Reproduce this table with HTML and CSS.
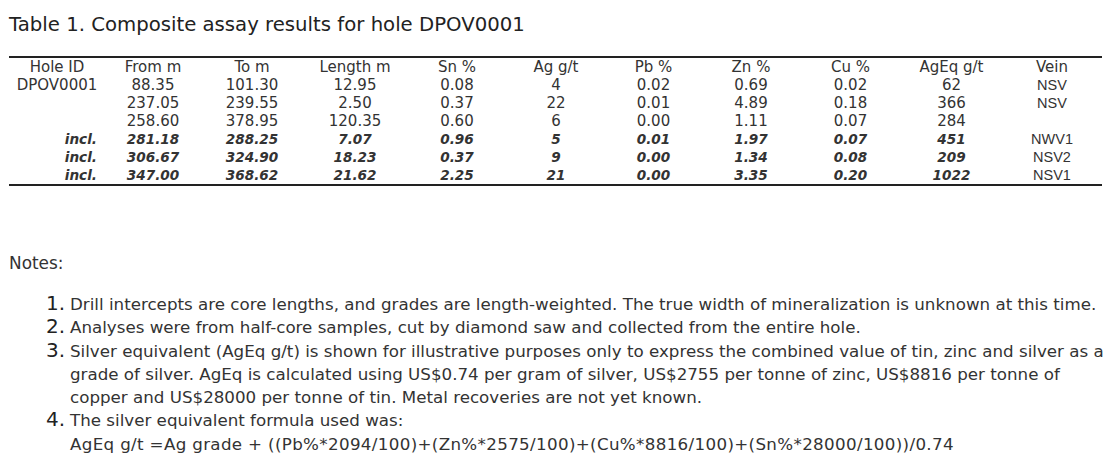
FILE: index.html
```html
<!DOCTYPE html>
<html>
<head>
<meta charset="utf-8">
<link rel="stylesheet" href="styles.css">
</head>
<body>
<h1 class="title">Table 1. Composite assay results for hole DPOV0001</h1>
<table class="assay">
  <colgroup>
    <col class="c1"><col class="c2"><col class="c3"><col class="c4"><col class="c5"><col class="c6"><col class="c7"><col class="c8"><col class="c9"><col class="c10"><col class="c11">
  </colgroup>
  <thead>
    <tr><th>Hole ID</th><th>From m</th><th>To m</th><th>Length m</th><th>Sn %</th><th>Ag g/t</th><th>Pb %</th><th>Zn %</th><th>Cu %</th><th>AgEq g/t</th><th>Vein</th></tr>
  </thead>
  <tbody>
    <tr><td>DPOV0001</td><td>88.35</td><td>101.30</td><td>12.95</td><td>0.08</td><td>4</td><td>0.02</td><td>0.69</td><td>0.02</td><td>62</td><td class="vein">NSV</td></tr>
    <tr><td></td><td>237.05</td><td>239.55</td><td>2.50</td><td>0.37</td><td>22</td><td>0.01</td><td>4.89</td><td>0.18</td><td>366</td><td class="vein">NSV</td></tr>
    <tr><td></td><td>258.60</td><td>378.95</td><td>120.35</td><td>0.60</td><td>6</td><td>0.00</td><td>1.11</td><td>0.07</td><td>284</td><td class="vein"></td></tr>
    <tr class="incl"><td class="lbl">incl.</td><td>281.18</td><td>288.25</td><td>7.07</td><td>0.96</td><td>5</td><td>0.01</td><td>1.97</td><td>0.07</td><td>451</td><td class="vein">NWV1</td></tr>
    <tr class="incl"><td class="lbl">incl.</td><td>306.67</td><td>324.90</td><td>18.23</td><td>0.37</td><td>9</td><td>0.00</td><td>1.34</td><td>0.08</td><td>209</td><td class="vein">NSV2</td></tr>
    <tr class="incl last"><td class="lbl">incl.</td><td>347.00</td><td>368.62</td><td>21.62</td><td>2.25</td><td>21</td><td>0.00</td><td>3.35</td><td>0.20</td><td>1022</td><td class="vein">NSV1</td></tr>
  </tbody>
</table>
<p class="notes-label">Notes:</p>
<ol class="notes">
  <li>Drill intercepts are core lengths, and grades are length-weighted. The true width of mineralization is unknown at this time.</li>
  <li>Analyses were from half-core samples, cut by diamond saw and collected from the entire hole.</li>
  <li>Silver equivalent (AgEq g/t) is shown for illustrative purposes only to express the combined value of tin, zinc and silver as a grade of silver. AgEq is calculated using US$0.74 per gram of silver, US$2755 per tonne of zinc, US$8816 per tonne of copper and US$28000 per tonne of tin. Metal recoveries are not yet known.</li>
  <li>The silver equivalent formula used was:<br><span class="formula">AgEq g/t =Ag grade + ((Pb%*2094/100)+(Zn%*2575/100)+(Cu%*8816/100)+(Sn%*28000/100))/0.74</span></li>
</ol>
</body>
</html>
```
FILE: styles.css
```css
html, body {
  background: #ffffff;
}
body {
  margin: 0;
  padding: 0 0 0 9px;
  font-family: "DejaVu Sans", Verdana, sans-serif;
  color: #222222;
}
.title {
  margin: 0;
  padding-top: 13px;
  font-size: 19.7px;
  font-weight: normal;
  line-height: 24px;
  color: #222222;
}
.assay {
  margin-top: 19px;
  border-collapse: collapse;
  table-layout: fixed;
  width: 1093px;
  font-size: 15px;
  color: #333333;
}
.c1 { width: 96px; }
.c2 { width: 96px; }
.c3 { width: 102px; }
.c4 { width: 104px; }
.c5 { width: 100px; }
.c6 { width: 98px; }
.c7 { width: 97px; }
.c8 { width: 98px; }
.c9 { width: 101px; }
.c10 { width: 101px; }
.c11 { width: 100px; }
.assay thead tr {
  border-top: 2px solid #222222;
}
.assay th {
  font-weight: normal;
  text-align: center;
  padding: 1px 0 0 0;
  height: 17px;
  line-height: 17px;
}
.assay td {
  text-align: center;
  padding: 0;
  height: 18px;
  line-height: 18px;
}
.assay tr.incl td {
  font-weight: bold;
  font-style: italic;
  font-size: 13.6px;
}
.assay tr.incl td.lbl {
  text-align: right;
  padding-right: 8px;
}
.assay td.vein {
  font-family: "Liberation Sans", Arial, sans-serif;
  font-size: 14.5px;
}
.assay tr.incl td.vein {
  font-weight: normal;
  font-style: normal;
  font-size: 14.5px;
}
.assay tr.last {
  border-bottom: 2px solid #222222;
}
.notes-label {
  margin: 66px 0 0 0;
  font-size: 16.9px;
  line-height: 22px;
  color: #333333;
}
.notes {
  margin: 19px 0 0 0;
  padding-left: 61px;
  font-size: 16.7px;
  line-height: 23.3px;
  color: #333333;
  list-style: none;
  counter-reset: note;
}
.notes li {
  counter-increment: note;
}
.notes li::before {
  content: counter(note) ".";
  display: inline-block;
  width: 24px;
  margin-left: -24px;
  font-size: 20px;
  line-height: 0;
  color: #222222;
}
.formula {
  letter-spacing: 0.34px;
}
```
